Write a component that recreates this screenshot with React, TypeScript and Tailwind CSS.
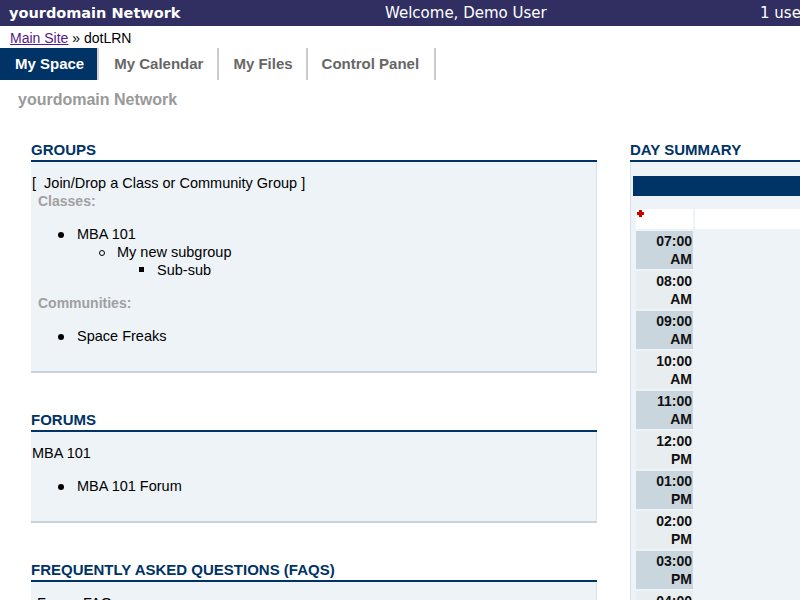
import { Fragment } from "react";
import type { FC, ReactNode } from "react";

const hours = [
  ["07:00", "AM"],
  ["08:00", "AM"],
  ["09:00", "AM"],
  ["10:00", "AM"],
  ["11:00", "AM"],
  ["12:00", "PM"],
  ["01:00", "PM"],
  ["02:00", "PM"],
  ["03:00", "PM"],
  ["04:00", "PM"],
  ["05:00", "PM"],
];

const tabs = [
  { label: "My Calendar", pad: "pl-[15px] pr-[14px]" },
  { label: "My Files", pad: "pl-[14px] pr-[13px]" },
  { label: "Control Panel", pad: "pl-[14px] pr-[15px]" },
];

const Section: FC<{ title: string; className?: string; children: ReactNode }> = ({
  title,
  className,
  children,
}) => (
  <div className={className}>
    <h2 className="text-[15px] leading-[18px] font-bold text-[#003366] pb-[1px] border-b-2 border-[#003366]">
      {title}
    </h2>
    <div className="bg-[#eef3f8] border-r border-[#d6e3ee] border-b-2 border-b-[#c9d0d6] pl-[1px] pt-[12px] pb-[11px]">
      {children}
    </div>
  </div>
);

// old-style list markers, bigger than chrome's default ones
const Item: FC<{ kind?: "disc" | "circle" | "square"; children: ReactNode }> = ({
  kind = "disc",
  children,
}) => (
  <li className="relative">
    {kind === "disc" && (
      <span className="absolute left-[-19px] top-[7px] w-[6px] h-[6px] rounded-full bg-black" />
    )}
    {kind === "circle" && (
      <span className="absolute left-[-18px] top-[7px] w-[6px] h-[6px] rounded-full border border-black" />
    )}
    {kind === "square" && (
      <span className="absolute left-[-18px] top-[6px] w-[5px] h-[5px] bg-black" />
    )}
    {children}
  </li>
);

const RedPlus: FC = () => (
  <svg width="7" height="7" viewBox="0 0 7 7" className="block">
    <path d="M2 0h3v2h2v3H5v2H2V5H0V2h2z" fill="#cc0000" />
  </svg>
);

const App: FC = () => {
  return (
    <div className="w-[800px] h-[600px] overflow-hidden bg-white text-black font-['Liberation_Sans',Arial,sans-serif] text-[14.5px] leading-[18px]">
      <div className="w-[1000px]">
        {/* top bar */}
        <div className="h-[26px] bg-[#312f62] text-white flex items-center font-['DejaVu_Sans',Verdana,sans-serif] leading-[26px]">
          <div className="w-[385px] pl-[9px] font-bold text-[14.5px]">yourdomain Network</div>
          <div className="w-[375px] text-[15px]">Welcome, Demo User</div>
          <div className="text-[15px] whitespace-nowrap">1 users online</div>
        </div>

        {/* breadcrumb */}
        <div className="h-[22px] pt-[4px] pl-[10px] leading-[16px] text-[14px]">
          <a className="text-[#551a8b] underline">Main Site</a> » dotLRN
        </div>

        {/* tabs */}
        <div className="h-[32px] flex text-[15px] font-bold leading-[32px] whitespace-nowrap">
          <div className="bg-[#003366] text-white pl-[15px] pr-[13px]">My Space</div>
          <div className="w-[2px] bg-[#d4d4d4]" />
          {tabs.map((t) => (
            <div key={t.label} className={`${t.pad} text-[#666666] border-r-2 border-[#cccccc]`}>
              {t.label}
            </div>
          ))}
        </div>

        <div className="pt-[10px] pl-[18px] text-[16px] leading-[20px] font-bold text-[#999999]">
          yourdomain Network
        </div>

        {/* main */}
        <div className="flex pl-[31px] pt-[31px] gap-[33px]">
          <div className="w-[566px] shrink-0">
            <Section title="GROUPS">
              <div>[ &nbsp;Join/Drop a Class or Community Group ]</div>
              <div className="pl-[6px]">
                <div className="font-bold text-[#a0a0a0] text-[14px]">Classes:</div>
                <ul className="pl-[39px] my-[15px]">
                  <Item>
                    MBA 101
                    <ul className="pl-[40px]">
                      <Item kind="circle">
                        My new subgroup
                        <ul className="pl-[40px]">
                          <Item kind="square">Sub-sub</Item>
                        </ul>
                      </Item>
                    </ul>
                  </Item>
                </ul>
                <div className="font-bold text-[#a0a0a0] text-[14px]">Communities:</div>
                <ul className="pl-[39px] my-[15px]">
                  <Item>Space Freaks</Item>
                </ul>
              </div>
            </Section>

            <Section title="FORUMS" className="mt-[38px]">
              <div>MBA 101</div>
              <ul className="pl-[45px] my-[15px]">
                <Item>MBA 101 Forum</Item>
              </ul>
            </Section>

            <Section title="FREQUENTLY ASKED QUESTIONS (FAQS)" className="mt-[38px]">
              <div className="pl-[5px]">Forum FAQ</div>
              <div className="h-[60px]" />
            </Section>
          </div>

          {/* day summary */}
          <div className="w-[360px] shrink-0">
            <h2 className="text-[15px] leading-[18px] font-bold text-[#003366] pb-[1px] border-b-2 border-[#003366]">
              DAY SUMMARY
            </h2>
            <div className="bg-[#eef3f8] border-l border-[#d6e3ee] pl-[2px] pt-[14px] pb-[20px]">
              <div className="h-[20px] bg-[#003366]" />
              <div className="grid grid-cols-[57px_1fr] gap-[2px] ml-[3px] mt-[13px]">
                <div className="h-[20px] bg-white pl-[1px] pt-[1px]">
                  <RedPlus />
                </div>
                <div className="h-[20px] bg-white" />
                {hours.map(([time, ampm], i) => (
                  <Fragment key={time}>
                    <div
                      className={`h-[38px] pt-[1px] pr-[1px] text-right font-bold text-[14px] text-[#111111] ${
                        i % 2 === 0 ? "bg-[#c9d6dd]" : "bg-[#e8edf0]"
                      }`}
                    >
                      <div>{time}</div>
                      <div>{ampm}</div>
                    </div>
                    <div className="h-[38px]" />
                  </Fragment>
                ))}
              </div>
            </div>
          </div>
        </div>
      </div>
    </div>
  );
};

export default App;
